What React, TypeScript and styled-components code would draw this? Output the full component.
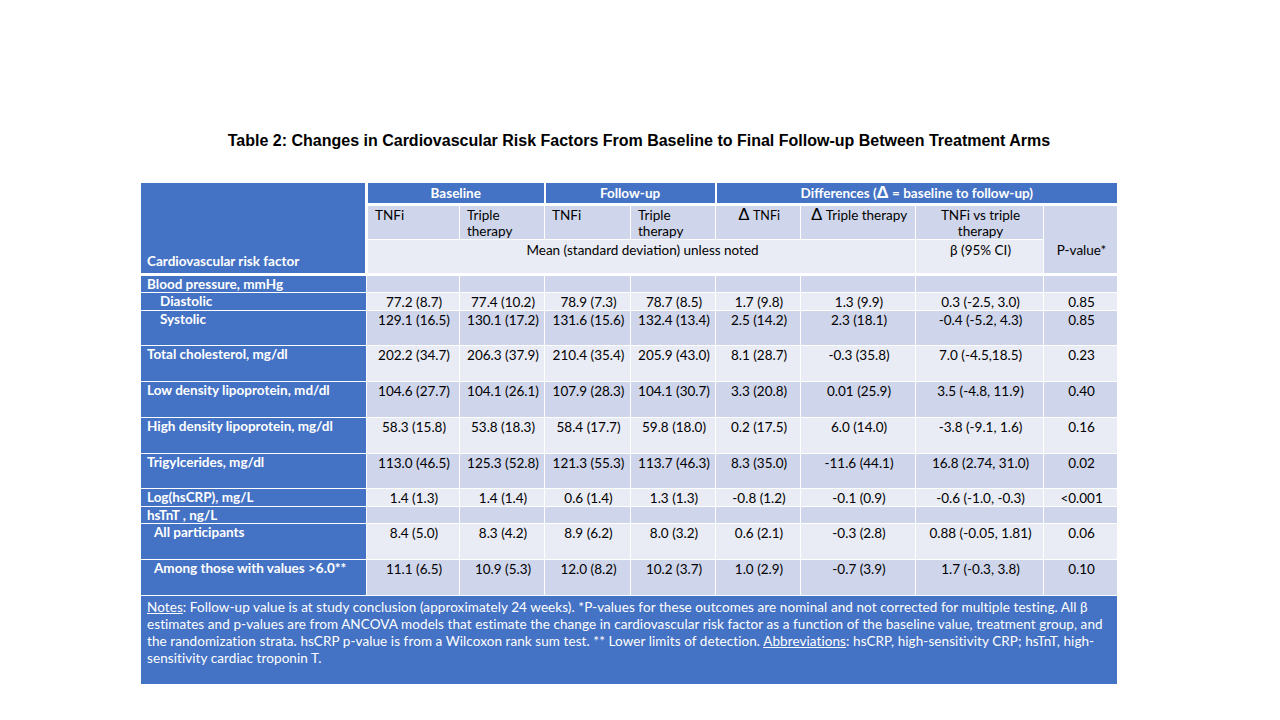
import React from "react";
import styled, { createGlobalStyle } from "styled-components";

const Global = createGlobalStyle`
  html, body { margin: 0; padding: 0; background: #ffffff; }
  body { font-family: Lato, "Open Sans", sans-serif; }
`;

const BLUE = "#4472C4";
const DARK = "#CFD5EA";
const LIGHT = "#E9EBF5";

const Page = styled.div`
  width: 1280px;
  height: 720px;
  box-sizing: border-box;
  padding-top: 131px;
  display: flex;
  flex-direction: column;
  align-items: flex-start;
`;

const Title = styled.h1`
  width: 100%;
  margin: 0;
  text-align: center;
  font-family: "Liberation Sans", Arial, sans-serif;
  font-weight: 700;
  font-size: 16px;
  line-height: 19px;
  color: #000;
  padding-right: 2px;
  box-sizing: border-box;
`;

const Table = styled.table`
  margin-top: 32px;
  margin-left: 140px;
  width: 977px;
  table-layout: fixed;
  border-collapse: collapse;
  font-family: Lato, "Open Sans", sans-serif;
  font-size: 13.5px;
  line-height: 16px;
  color: #000;
`;

const Cell = styled.td<{ $tone?: "dark" | "light"; $align?: "left" | "center"; $h?: number }>`
  background: ${(p) => (p.$tone === "light" ? LIGHT : DARK)};
  border: 1px solid #ffffff;
  padding: 1px 5px 0 7px;
  vertical-align: top;
  text-align: ${(p) => p.$align ?? "center"};
  height: ${(p) => (p.$h ? `${p.$h}px` : "auto")};
  white-space: nowrap;
  box-sizing: border-box;
`;

const Corner = styled.th`
  background: ${BLUE};
  color: #fff;
  font-weight: 700;
  text-align: left;
  vertical-align: bottom;
  padding: 0 6px 4px 6px;
  border: 1px solid #fff;
  border-right: 3px solid #fff;
  border-bottom: 3px solid #fff;
  box-sizing: border-box;
`;

const GroupHead = styled.th`
  background: ${BLUE};
  color: #fff;
  font-weight: 700;
  text-align: center;
  vertical-align: top;
  height: 22px;
  padding: 2px 4px 0;
  border: 1px solid #fff;
  border-left: 2px solid #fff;
  border-bottom: 3px solid #fff;
  white-space: nowrap;
  box-sizing: border-box;
`;

const SubHead = styled(Cell).attrs({ as: "th" })`
  font-weight: 400;
  height: 35px;
`;

const MeanCell = styled(Cell).attrs({ as: "th" })`
  font-weight: 400;
  height: 35px;
  padding-top: 2px;
  border-bottom: 3px solid #fff;
`;

const PHead = styled(Cell).attrs({ as: "th" })`
  font-weight: 400;
  vertical-align: top;
  padding-top: 36px;
  border-bottom: 3px solid #fff;
`;

const Delta = styled.span`
  font-size: 17px;
  line-height: 14px;
  font-family: "Liberation Sans", Arial, sans-serif;
`;

const Small = styled.span`
  font-size: 12.5px;
`;

const Label = styled.th<{ $indent?: number; $h: number }>`
  background: ${BLUE};
  color: #fff;
  font-weight: 700;
  text-align: left;
  vertical-align: top;
  height: ${(p) => p.$h}px;
  padding: 0 4px 0 ${(p) => 6 + (p.$indent ?? 0)}px;
  border: 1px solid #fff;
  white-space: nowrap;
  box-sizing: border-box;
`;

const NotesCell = styled.td`
  background: ${BLUE};
  color: #fff;
  height: 89px;
  vertical-align: top;
  padding: 3px 6px 0 6px;
  border: 1px solid #fff;
  font-size: 13.5px;
  line-height: 17px;
  letter-spacing: 0.08px;
  box-sizing: border-box;
`;

const NoteLine = styled.span`
  display: block;
  white-space: nowrap;
`;

const U = styled.span`
  text-decoration: underline;
`;

type Row = {
  label: string;
  indent?: number;
  h: number;
  tone: "dark" | "light";
  values: string[];
};

const rows: Row[] = [
  { label: "Blood pressure, mmHg", h: 17, tone: "dark", values: ["", "", "", "", "", "", "", ""] },
  { label: "Diastolic", indent: 13, h: 18, tone: "light", values: ["77.2 (8.7)", "77.4 (10.2)", "78.9 (7.3)", "78.7 (8.5)", "1.7 (9.8)", "1.3 (9.9)", "0.3 (-2.5, 3.0)", "0.85"] },
  { label: "Systolic", indent: 13, h: 35, tone: "dark", values: ["129.1 (16.5)", "130.1 (17.2)", "131.6 (15.6)", "132.4 (13.4)", "2.5 (14.2)", "2.3 (18.1)", "-0.4 (-5.2, 4.3)", "0.85"] },
  { label: "Total cholesterol, mg/dl", h: 36, tone: "light", values: ["202.2 (34.7)", "206.3 (37.9)", "210.4 (35.4)", "205.9 (43.0)", "8.1 (28.7)", "-0.3 (35.8)", "7.0 (-4.5,18.5)", "0.23"] },
  { label: "Low density lipoprotein, md/dl", h: 36, tone: "dark", values: ["104.6 (27.7)", "104.1 (26.1)", "107.9 (28.3)", "104.1 (30.7)", "3.3 (20.8)", "0.01 (25.9)", "3.5 (-4.8, 11.9)", "0.40"] },
  { label: "High density lipoprotein, mg/dl", h: 36, tone: "light", values: ["58.3 (15.8)", "53.8 (18.3)", "58.4 (17.7)", "59.8 (18.0)", "0.2 (17.5)", "6.0 (14.0)", "-3.8 (-9.1, 1.6)", "0.16"] },
  { label: "Trigylcerides, mg/dl", h: 35, tone: "dark", values: ["113.0 (46.5)", "125.3 (52.8)", "121.3 (55.3)", "113.7 (46.3)", "8.3 (35.0)", "-11.6 (44.1)", "16.8 (2.74, 31.0)", "0.02"] },
  { label: "Log(hsCRP), mg/L", h: 18, tone: "light", values: ["1.4 (1.3)", "1.4 (1.4)", "0.6 (1.4)", "1.3 (1.3)", "-0.8 (1.2)", "-0.1 (0.9)", "-0.6 (-1.0, -0.3)", "<0.001"] },
  { label: "hsTnT , ng/L", h: 17, tone: "dark", values: ["", "", "", "", "", "", "", ""] },
  { label: "All participants", indent: 7, h: 36, tone: "light", values: ["8.4 (5.0)", "8.3 (4.2)", "8.9 (6.2)", "8.0 (3.2)", "0.6 (2.1)", "-0.3 (2.8)", "0.88 (-0.05, 1.81)", "0.06"] },
  { label: "Among those with values >6.0**", indent: 7, h: 36, tone: "dark", values: ["11.1 (6.5)", "10.9 (5.3)", "12.0 (8.2)", "10.2 (3.7)", "1.0 (2.9)", "-0.7 (3.9)", "1.7 (-0.3, 3.8)", "0.10"] },
];

const widths = [226, 93, 85, 86, 85, 85, 115, 128, 74];

export default function App() {
  return (
    <>
      <Global />
      <Page>
        <Title>
          Table 2: Changes in Cardiovascular Risk Factors From Baseline to Final Follow-up Between Treatment Arms
        </Title>
        <Table>
          <colgroup>
            {widths.map((w, i) => (
              <col key={i} style={{ width: w }} />
            ))}
          </colgroup>
          <thead>
            <tr>
              <Corner rowSpan={3}>Cardiovascular risk factor</Corner>
              <GroupHead colSpan={2}>Baseline</GroupHead>
              <GroupHead colSpan={2}>Follow-up</GroupHead>
              <GroupHead colSpan={4}>
                Differences (<Delta>Δ</Delta> = baseline to follow-up)
              </GroupHead>
            </tr>
            <tr>
              <SubHead $align="left">TNFi</SubHead>
              <SubHead $align="left">
                Triple
                <br />
                therapy
              </SubHead>
              <SubHead $align="left">TNFi</SubHead>
              <SubHead $align="left">
                Triple
                <br />
                therapy
              </SubHead>
              <SubHead>
                <Delta>Δ</Delta> <Small>TNFi</Small>
              </SubHead>
              <SubHead>
                <Delta>Δ</Delta> Triple therapy
              </SubHead>
              <SubHead>
                TNFi vs triple
                <br />
                therapy
              </SubHead>
              <PHead rowSpan={2}>P-value*</PHead>
            </tr>
            <tr>
              <MeanCell $tone="light" colSpan={6}>
                Mean (standard deviation) unless noted
              </MeanCell>
              <MeanCell $tone="light">β (95% CI)</MeanCell>
            </tr>
          </thead>
          <tbody>
            {rows.map((r) => (
              <tr key={r.label}>
                <Label $indent={r.indent} $h={r.h}>
                  {r.label}
                </Label>
                {r.values.map((v, i) => (
                  <Cell key={i} $tone={r.tone} $h={r.h}>
                    {v}
                  </Cell>
                ))}
              </tr>
            ))}
            <tr>
              <NotesCell colSpan={9}>
                <NoteLine>
                  <U>Notes</U>: Follow-up value is at study conclusion (approximately 24 weeks). *P-values for these outcomes are nominal and not corrected for multiple testing. All β
                </NoteLine>
                <NoteLine>
                  estimates and p-values are from ANCOVA models that estimate the change in cardiovascular risk factor as a function of the baseline value, treatment group, and
                </NoteLine>
                <NoteLine>
                  the randomization strata. hsCRP p-value is from a Wilcoxon rank sum test. ** Lower limits of detection. <U>Abbreviations</U>: hsCRP, high-sensitivity CRP; hsTnT, high-
                </NoteLine>
                <NoteLine>sensitivity cardiac troponin T.</NoteLine>
              </NotesCell>
            </tr>
          </tbody>
        </Table>
      </Page>
    </>
  );
}
